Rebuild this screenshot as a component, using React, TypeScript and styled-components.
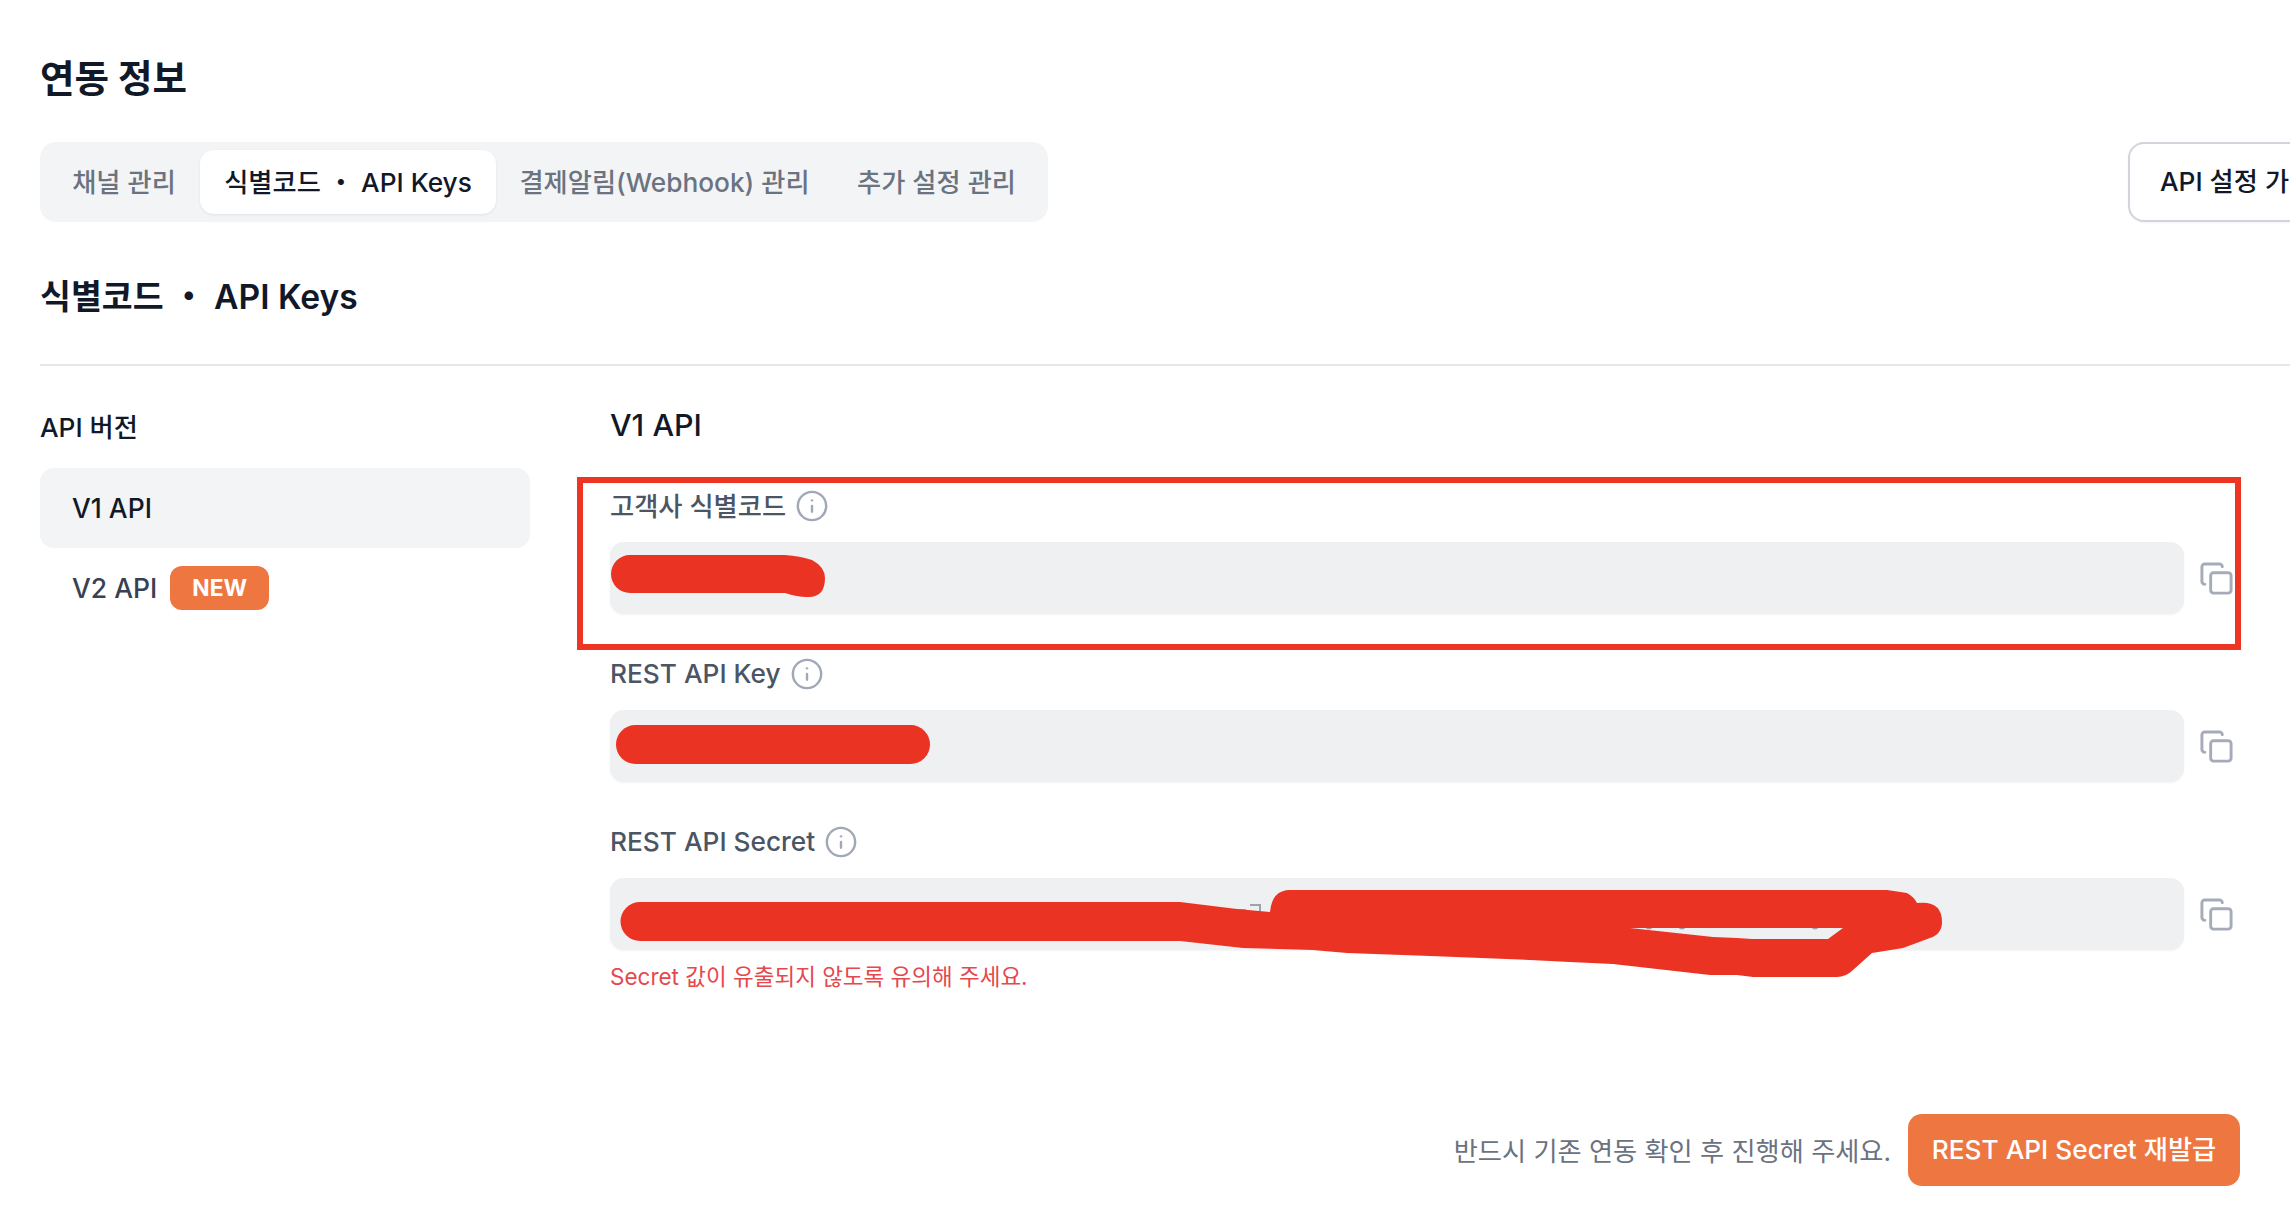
import React from 'react';
import styled, { createGlobalStyle } from 'styled-components';
import { Copy, Info } from 'lucide-react';

const GlobalStyle = createGlobalStyle`
  html, body {
    margin: 0;
    padding: 0;
    background: #fff;
    overflow: hidden;
  }
  * {
    box-sizing: border-box;
  }
  body {
    font-family: Inter, 'Noto Sans CJK KR', sans-serif;
  }
`;

const Page = styled.div`
  width: 2290px;
  height: 1218px;
  overflow: hidden;
  padding: 50px 0 0 40px;
  background: #fff;
`;

const Title = styled.h1`
  margin: 0 0 36px;
  height: 56px;
  line-height: 58px;
  font-size: 37.5px;
  font-weight: 700;
  color: #111827;
`;

const TabRow = styled.div`
  display: flex;
  align-items: center;
  gap: 1080px;
  height: 80px;
`;

const TabBar = styled.div`
  display: flex;
  flex-shrink: 0;
  width: 1008px;
  height: 80px;
  padding: 8px;
  border-radius: 16px;
  background: #f3f4f6;
`;

const Tab = styled.div<{ $active?: boolean; $width: number }>`
  width: ${({ $width }) => $width}px;
  height: 64px;
  line-height: 65px;
  text-align: center;
  white-space: nowrap;
  border-radius: 14px;
  font-size: 26.25px;
  font-weight: 500;
  color: ${({ $active }) => ($active ? '#111827' : '#6b7280')};
  background: ${({ $active }) => ($active ? '#fff' : 'transparent')};
  box-shadow: ${({ $active }) => ($active ? '0 1px 3px rgba(0, 0, 0, 0.08)' : 'none')};
`;

const GuideButton = styled.div`
  flex-shrink: 0;
  height: 80px;
  line-height: 76px;
  padding: 0 30px;
  white-space: nowrap;
  border: 2px solid #d1d5db;
  border-radius: 16px;
  background: #fff;
  box-shadow: 0 1px 2px rgba(0, 0, 0, 0.05);
  font-size: 26.25px;
  font-weight: 500;
  color: #111827;
`;

const SectionTitle = styled.h2`
  margin: 50px 0 0;
  height: 50px;
  line-height: 50px;
  font-size: 33.6px;
  font-weight: 600;
  color: #111827;
`;

const Divider = styled.div`
  height: 2px;
  margin-top: 42px;
  background: #e5e7eb;
`;

const Columns = styled.div`
  display: flex;
  gap: 80px;
  margin-top: 39px;
`;

const Sidebar = styled.div`
  flex-shrink: 0;
  width: 490px;
  padding-top: 2px;
`;

const SidebarTitle = styled.div`
  height: 40px;
  line-height: 42px;
  margin-bottom: 21px;
  font-size: 26.25px;
  font-weight: 500;
  color: #111827;
`;

const VersionItem = styled.div<{ $active?: boolean }>`
  display: flex;
  align-items: center;
  gap: 13px;
  height: 80px;
  padding-left: 32px;
  border-radius: 14px;
  font-size: 26.5px;
  font-weight: 500;
  color: ${({ $active }) => ($active ? '#111827' : '#374151')};
  background: ${({ $active }) => ($active ? '#f3f4f6' : 'transparent')};
`;

const NewBadge = styled.span`
  display: inline-flex;
  align-items: center;
  justify-content: center;
  width: 99px;
  height: 44px;
  padding-bottom: 1px;
  border-radius: 12px;
  background: #ee7741;
  color: #fff;
  font-size: 22.75px;
  font-weight: 700;
`;

const Main = styled.div`
  width: 1630px;
`;

const MainTitle = styled.div`
  height: 40px;
  line-height: 40px;
  margin-bottom: 41px;
  font-size: 30.5px;
  font-weight: 500;
  color: #111827;
`;

const Field = styled.div`
  position: relative;
  margin-bottom: 40px;
`;

const FieldLabel = styled.div`
  display: flex;
  align-items: center;
  gap: 9px;
  height: 40px;
  margin-bottom: 16px;
  font-size: 26.25px;
  font-weight: 500;
  color: #4b5563;
`;

const LabelText = styled.span`
  position: relative;
  top: -1px;
`;

const InfoIcon = styled(Info)`
  color: #a0a7b5;
`;

const ValueRow = styled.div`
  display: flex;
  align-items: center;
  gap: 15px;
  padding-right: 6px;
  color: #a5abb8;
`;

const ValueBox = styled.div`
  position: relative;
  flex: 1;
  height: 72px;
  border-radius: 14px;
  background: #eff0f2;
  box-shadow: 0 1px 2px rgba(0, 0, 0, 0.05);
`;

const Redaction = styled.svg`
  position: absolute;
  left: 0;
  top: 0;
  width: 1574px;
  height: 72px;
  overflow: visible;
  fill: #eb3323;
  z-index: 1;
`;

const Highlight = styled.div`
  position: absolute;
  left: -33px;
  top: -9px;
  right: -1px;
  bottom: -36px;
  border: 6px solid #ee3524;
  pointer-events: none;
`;

const HelpText = styled.div`
  height: 40px;
  line-height: 37px;
  margin-top: -32px;
  font-size: 22.5px;
  color: #e5484d;
`;

const Footer = styled.div`
  display: flex;
  align-items: center;
  justify-content: flex-end;
  gap: 17px;
  margin-top: 116px;
`;

const FooterNote = styled.span`
  font-size: 26.2px;
  color: #6b7280;
`;

const ReissueButton = styled.div`
  width: 332px;
  height: 72px;
  line-height: 72px;
  text-align: center;
  white-space: nowrap;
  border-radius: 14px;
  background: #ee7741;
  color: #fff;
  font-size: 26.25px;
  font-weight: 500;
`;

const tabs = [
  { label: '채널 관리', width: 152 },
  { label: '식별코드 ・ API Keys', width: 296, active: true },
  { label: '결제알림(Webhook) 관리', width: 337 },
  { label: '추가 설정 관리', width: 207 },
];

const CODE_PATH =
  'M630 555 L785 555 Q800 556 812 560 Q825 567 825 578 Q825 598 807 597 Q797 597 785 593 L630 593 A19 19 0 0 1 630 555 Z';

const SECRET_PATH =
  'M640 902 L1180 902 L1237 909 L1270 912 Q1272 890 1290 890 L1887 890 L1907 893 Q1914 897 1917 903 Q1942 900 1942 922 Q1942 934 1930 938 L1903 948 L1872 953 L1853 970 Q1846 977 1837 977 L1753 977 L1737 975 L1710 975 L1613 964 L1570 962 L1530 960 L1430 956 L1347 953 L1313 950 L1243 948 L1180 941 L640 941 A19.5 19.5 0 0 1 640 902 Z M1630 928 L1713 937 L1737 938 L1752 939 L1828 939 L1843 928 Z';

export default function App() {
  return (
    <Page>
      <GlobalStyle />
      <Title>연동 정보</Title>
      <TabRow>
        <TabBar>
          {tabs.map((tab) => (
            <Tab key={tab.label} $active={tab.active} $width={tab.width}>
              {tab.label}
            </Tab>
          ))}
        </TabBar>
        <GuideButton>API 설정 가이드</GuideButton>
      </TabRow>
      <SectionTitle>식별코드 ・ API Keys</SectionTitle>
      <Divider />
      <Columns>
        <Sidebar>
          <SidebarTitle>API 버전</SidebarTitle>
          <VersionItem $active>V1 API</VersionItem>
          <VersionItem>
            V2 API
            <NewBadge>NEW</NewBadge>
          </VersionItem>
        </Sidebar>
        <Main>
          <MainTitle>V1 API</MainTitle>
          <Field>
            <FieldLabel>
              <LabelText>고객사 식별코드</LabelText>
              <InfoIcon size={34} strokeWidth={1.7} />
            </FieldLabel>
            <ValueRow>
              <ValueBox>
                <Redaction viewBox="610 542 1574 72">
                  <path d={CODE_PATH} />
                </Redaction>
              </ValueBox>
              <Copy size={35} strokeWidth={2} />
            </ValueRow>
            <Highlight />
          </Field>
          <Field>
            <FieldLabel>
              <LabelText>REST API Key</LabelText>
              <InfoIcon size={34} strokeWidth={1.7} />
            </FieldLabel>
            <ValueRow>
              <ValueBox>
                <Redaction viewBox="610 710 1574 72">
                  <rect x="616" y="725" width="314" height="39" rx="19.5" />
                </Redaction>
              </ValueBox>
              <Copy size={35} strokeWidth={2} />
            </ValueRow>
          </Field>
          <Field>
            <FieldLabel>
              <LabelText>REST API Secret</LabelText>
              <InfoIcon size={34} strokeWidth={1.7} />
            </FieldLabel>
            <ValueRow>
              <ValueBox>
                <Redaction viewBox="610 878 1574 72">
                  {/* bits of the hidden value that show past the scribble */}
                  <circle cx="1649" cy="926" r="3.5" fill="#9ca3af" />
                  <circle cx="1682" cy="926" r="3.5" fill="#9ca3af" />
                  <circle cx="1815" cy="926" r="3.5" fill="#9ca3af" />
                  <path d="M1238 910 h8 M1250 905 h10 v7" fill="none" stroke="#9ca3af" strokeWidth="2" />
                  <path d={SECRET_PATH} fillRule="evenodd" />
                </Redaction>
              </ValueBox>
              <Copy size={35} strokeWidth={2} />
            </ValueRow>
          </Field>
          <HelpText>Secret 값이 유출되지 않도록 유의해 주세요.</HelpText>
          <Footer>
            <FooterNote>반드시 기존 연동 확인 후 진행해 주세요.</FooterNote>
            <ReissueButton>REST API Secret 재발급</ReissueButton>
          </Footer>
        </Main>
      </Columns>
    </Page>
  );
}
